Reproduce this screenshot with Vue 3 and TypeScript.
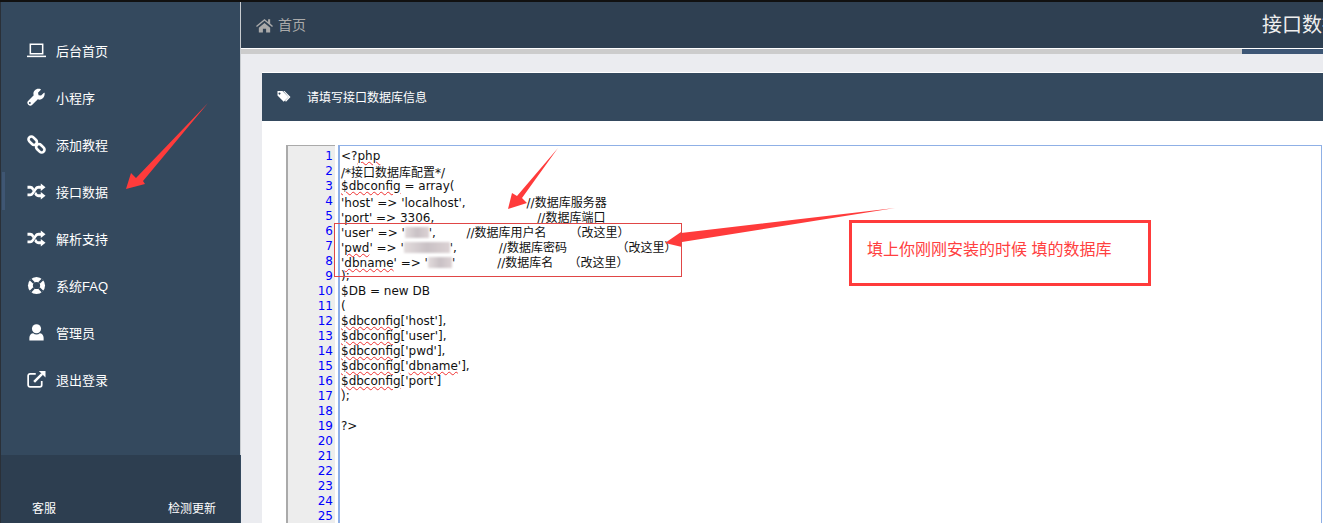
<script setup lang="ts">
type Seg = { text: string; cls: string; width?: number }

const menu = [
  { label: '后台首页', icon: 'laptop' },
  { label: '小程序', icon: 'wrench' },
  { label: '添加教程', icon: 'link' },
  { label: '接口数据', icon: 'random', active: true },
  { label: '解析支持', icon: 'random' },
  { label: '系统FAQ', icon: 'life' },
  { label: '管理员', icon: 'user' },
  { label: '退出登录', icon: 'external' },
]

const sp = (n: number) => ' '.repeat(n)

const source: string[] = [
  '<?~php~',
  '/*接口数据库配置*/',
  '~$dbconfig~ = array(',
  `'host' => 'localhost',${sp(16)}//数据库服务器`,
  `'port' => 3306,${sp(27)}//数据库端口`,
  `'user' => '#24#',${sp(8)}//数据库用户名${sp(6)}（改这里）`,
  `'~pwd~' => '#46#',${sp(11)}//数据库密码${sp(13)}（改这里）`,
  `'~dbname~' => '#24#'${sp(11)}//数据库名${sp(4)}（改这里）`,
  ');',
  '$DB = new DB',
  '(',
  "~$dbconfig~['host'],",
  "~$dbconfig~['user'],",
  "~$dbconfig~['pwd'],",
  "~$dbconfig~['~dbname~'],",
  "~$dbconfig~['port']",
  ');',
  '',
  '?>',
  '', '', '', '', '', '',
]

function parse(line: string): Seg[] {
  const out: Seg[] = []
  const re = /~([^~]+)~|#(\d+)#|([\u3000-\u9fff\uff00-\uffef]+)|([^~#\u3000-\u9fff\uff00-\uffef]+)/g
  let m: RegExpExecArray | null
  while ((m = re.exec(line))) {
    if (m[1]) out.push({ text: m[1], cls: 'squiggle' })
    else if (m[2]) out.push({ text: '', cls: 'smudge', width: Number(m[2]) })
    else if (m[3]) out.push({ text: m[3], cls: 'cjk' })
    else out.push({ text: m[4], cls: '' })
  }
  return out
}

const lines = source.map(parse)
</script>

<template>
  <div class="page">
    <aside class="side">
      <nav class="menu">
        <a v-for="item in menu" :key="item.label" class="item" :class="{ active: item.active }">
          <svg class="ico" viewBox="0 0 20 20">
            <template v-if="item.icon === 'laptop'">
              <path d="M3.500 3.500h13v10h-13z" fill="none" stroke="#fff" stroke-width="1.600" />
              <path d="M0 15.400h20v1.600H0z" fill="#fff" />
            </template>
            <path v-else-if="item.icon === 'wrench'" fill="#fff" d="M18.600 5.200c-.1-.3-.5-.4-.7-.2l-3.100 3-2.600-.5-.6-2.500 3-3.100c.2-.2.1-.6-.2-.7C11.800.4 9.500 1 8.100 2.500 6.700 3.900 6.400 6 7.100 7.700L1.100 13.800c-1 1-1 2.600 0 3.600l.6.600c1 1 2.600 1 3.600 0l6.100-6.100c1.700.7 3.800.3 5.200-1.100 1.500-1.400 2.100-3.500 2-5.600zM3 16.800c-.6 0-1-.4-1-1s.4-1 1-1 1 .4 1 1-.4 1-1 1z" />
            <g v-else-if="item.icon === 'link'" fill="none" stroke="#fff" stroke-width="2.800">
              <rect x="-5" y="-3" width="10" height="6" rx="3" transform="translate(6 6) rotate(45)" />
              <rect x="-5" y="-3" width="10" height="6" rx="3" transform="translate(14 14) rotate(45)" />
            </g>
            <path v-else-if="item.icon === 'random'" fill="#fff" d="M14.500 1.500l5 4-5 4V7h-2.300c-.9 0-1.500.5-2 1.200L6.900 13c-.8 1.200-2 2-3.500 2H.5v-3h2.800c.7 0 1.300-.4 1.700-1l3.200-4.700C9.100 4.900 10.400 4 12.200 4h2.300zM.5 4h2.900c1.500 0 2.700.8 3.500 2L7.600 7l-1.700 2.500L5 8.100C4.600 7.500 4 7 3.300 7H.5zm14 6.500l5 4-5 4V16h-2.300c-1.700 0-3-.9-3.900-2.300l-.6-.9 1.700-2.500 1.200 1.700c.4.700 1 1 1.600 1h2.300z" />
            <g v-else-if="item.icon === 'life'">
              <circle cx="10" cy="10" r="9" fill="#fff" />
              <circle cx="10" cy="10" r="3.800" fill="#34495e" />
              <path d="M3.600 3.600l3.800 3.800M16.400 3.600l-3.800 3.800M3.600 16.400l3.800-3.800M16.400 16.400l-3.800-3.800" stroke="#34495e" stroke-width="2.400" />
            </g>
            <g v-else-if="item.icon === 'user'" fill="#fff">
              <circle cx="10" cy="6" r="4.800" />
              <path d="M2.500 18.500v-3c0-2.900 2-4.800 4-4.800 1 .8 2.200 1.300 3.500 1.300s2.500-.5 3.500-1.300c2 0 4 1.900 4 4.800v3z" />
            </g>
            <g v-else fill="none" stroke="#fff">
              <path d="M15.500 11.500v4.200c0 1.200-.9 2-2 2H3.200c-1.100 0-2-.8-2-2V6c0-1.100.9-2 2-2h6" stroke-width="1.800" />
              <path d="M7.500 12.500L16 4" stroke-width="2.600" />
              <path d="M12.500 1h7v7z" fill="#fff" stroke="none" />
            </g>
          </svg>
          <span>{{ item.label }}</span>
        </a>
      </nav>
      <footer class="side-foot">
        <span>客服</span>
        <span>检测更新</span>
      </footer>
    </aside>

    <main class="main">
      <header class="top">
        <div class="crumb">
          <svg class="home" viewBox="0 0 18 15">
            <path fill="#aaa" d="M9 0.500L0 8l1 1.200L9 2.600l8 6.600L18 8l-3-2.500V1h-2.200v2.700zM3 9.800V15h4.300v-4h3.400v4H15V9.800L9 4.800z" />
          </svg>
          <span>首页</span>
        </div>
        <h1 class="title">接口数据</h1>
      </header>
      <div class="bar"><i></i></div>

      <section class="panel">
        <div class="panel-head">
          <svg class="tag" viewBox="0 0 14 11">
            <path fill="#fff" d="M0.500 0h5l6 6-4.800 4.800-6.200-6.200zM2.500 1.500a1 1 0 1 0 .01 0z" fill-rule="evenodd" />
            <path fill="#fff" d="M7.500 0l6 6-4.500 4.800-1-1 3.500-3.800L6.200 0z" />
          </svg>
          <span>请填写接口数据库信息</span>
        </div>
        <div class="panel-body">
          <div class="editor">
            <div class="gutter">
              <div v-for="(_, i) in lines" :key="i">{{ i + 1 }}</div>
            </div>
            <div class="code">
              <div v-for="(segs, i) in lines" :key="i" class="line">
                <template v-for="(s, j) in segs" :key="j">
                  <span v-if="s.cls === 'smudge'" class="smudge" :style="{ width: s.width + 'px' }"></span>
                  <span v-else :class="s.cls">{{ s.text }}</span>
                </template>
              </div>
            </div>
          </div>
        </div>
      </section>
    </main>

    <svg class="marks" viewBox="0 0 1323 523">
      <g fill="#ff3b3b">
        <path d="M208 103L143 181L145 184L126 189L131 173L136 178Z" />
        <path d="M558 148L522 198L527 203L508 209L512 193L517 196Z" />
        <path d="M895 208L681 233V232L665 243L682 247V242Z" />
      </g>
      <rect x="334.500" y="223.500" width="347" height="53" fill="none" stroke="#e04646" />
    </svg>
    <div class="note">填上你刚刚安装的时候 填的数据库</div>
  </div>
</template>

<style>
html, body { margin: 0; overflow: hidden; }
</style>

<style scoped>
.page {
  position: relative;
  display: flex;
  width: 1323px;
  height: 523px;
  overflow: hidden;
  box-sizing: border-box;
  border-top: 2px solid #111;
  background: #ebecf0;
  font-family: "Liberation Sans", "Noto Sans CJK SC", sans-serif;
}
.side {
  flex: 0 0 241px;
  display: flex;
  flex-direction: column;
  box-sizing: border-box;
  border-left: 1px solid #2a3038;
  background: #34495e;
  color: #fff;
}
.menu {
  flex: 1;
  padding-top: 25px;
  border-right: 1px solid #c8ccd0;
}
.item {
  position: relative;
  display: flex;
  align-items: center;
  height: 47px;
  padding-left: 26px;
  font-size: 13px;
}
.item.active::before {
  content: "";
  position: absolute;
  left: 1px;
  top: 4px;
  width: 3px;
  height: 38px;
  background: #3f5673;
}
.ico {
  width: 19px;
  height: 19px;
  margin-right: 10px;
}
.side-foot {
  flex: 0 0 68px;
  display: flex;
  justify-content: space-between;
  align-items: flex-end;
  box-sizing: border-box;
  margin-right: 1px;
  padding: 0 24px 5px 31px;
  background: #2d3e50;
  font-size: 12px;
  line-height: 18px;
}
.main {
  flex: 1;
  min-width: 0;
  display: flex;
  flex-direction: column;
}
.top {
  flex: 0 0 46px;
  display: flex;
  align-items: center;
  box-sizing: border-box;
  background: #2f4052;
  color: #fff;
}
.crumb {
  flex: 0 0 1021px;
  display: flex;
  align-items: center;
  box-sizing: border-box;
  padding-left: 15px;
  font-size: 14px;
  line-height: 20px;
  color: #aaa;
}
.home {
  width: 17px;
  height: 15px;
  margin-right: 5px;
}
.title {
  flex: 0 0 auto;
  margin: 0;
  font-size: 20px;
  font-weight: 400;
  line-height: 28px;
  white-space: nowrap;
  color: #eee;
}
.bar {
  flex: 0 0 5px;
  display: flex;
  justify-content: flex-end;
  border-top: 1px solid #fff;
  background: #ccc;
}
.bar i {
  display: block;
  width: 81px;
  background: #3d5675;
}
.panel {
  flex: 1;
  margin: 18px -20px 0 21px;
  border-top: 1px solid #fff;
  background: #fff;
  min-height: 0;
}
.panel-head {
  display: flex;
  align-items: center;
  box-sizing: border-box;
  height: 48px;
  padding: 0 0 2px 15px;
  background: #34495e;
  color: #fff;
  font-size: 12px;
}
.tag {
  width: 14px;
  height: 11px;
  margin-right: 16px;
}
.panel-body {
  padding: 24px 0 0 24px;
}
.editor {
  display: flex;
  width: 1036px;
  height: 420px;
}
.gutter {
  flex: 0 0 49px;
  box-sizing: border-box;
  padding-right: 2px;
  padding-top: 3px;
  border-left: 2px solid #aaa;
  border-top: 1px solid #aaa;
  background: #ededed;
  color: #00f;
  text-align: right;
  font-family: "DejaVu Sans", sans-serif;
  font-size: 12px;
  line-height: 15px;
}
.code {
  flex: 1;
  margin-left: 3px;
  box-sizing: border-box;
  padding: 3px 0 0 1px;
  border: solid #8fb0e6;
  border-width: 1px 1px 0 2px;
  color: #111;
  font-family: "DejaVu Sans", "Noto Sans CJK SC", sans-serif;
  font-size: 12px;
  line-height: 15px;
  white-space: pre;
}
.line {
  height: 15px;
}
.cjk {
  font-size: 12px;
  font-family: "Noto Sans CJK SC", sans-serif;
}
.squiggle {
  text-decoration: underline wavy #f03030 1px;
  text-underline-offset: 1px;
}
.smudge {
  display: inline-block;
  height: 11px;
  vertical-align: -1px;
  background: linear-gradient(90deg, #e3dcdd, #c9c1c5 50%, #dcd2d4);
  filter: blur(1px);
}
.marks {
  position: absolute;
  left: 0;
  top: -2px;
  width: 1323px;
  height: 523px;
  pointer-events: none;
}
.note {
  position: absolute;
  left: 849px;
  top: 218px;
  width: 302px;
  height: 66px;
  box-sizing: border-box;
  padding: 17px 0 0 15px;
  border: 3px solid #ff3b3b;
  color: #ff4040;
  font-size: 16px;
  line-height: 20px;
}
</style>
